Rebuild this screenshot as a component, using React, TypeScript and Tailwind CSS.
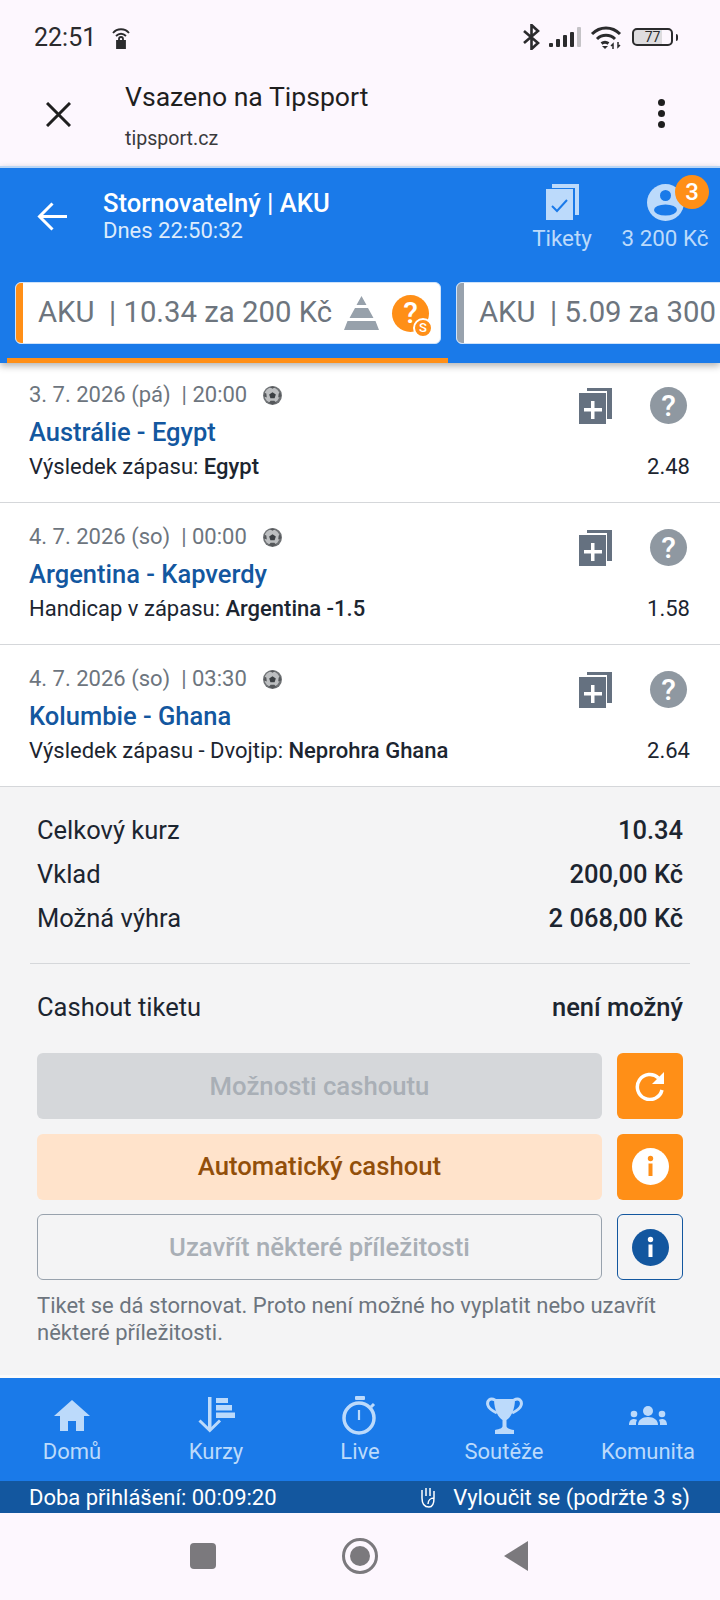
import React from 'react';

const matches = [
  { date: '3. 7. 2026 (pá)', time: '20:00', name: 'Austrálie - Egypt', label: 'Výsledek zápasu: ', pick: 'Egypt', odd: '2.48' },
  { date: '4. 7. 2026 (so)', time: '00:00', name: 'Argentina - Kapverdy', label: 'Handicap v zápasu: ', pick: 'Argentina -1.5', odd: '1.58' },
  { date: '4. 7. 2026 (so)', time: '03:30', name: 'Kolumbie - Ghana', label: 'Výsledek zápasu - Dvojtip: ', pick: 'Neprohra Ghana', odd: '2.64' },
];

const totals = [
  { label: 'Celkový kurz', value: '10.34' },
  { label: 'Vklad', value: '200,00 Kč' },
  { label: 'Možná výhra', value: '2 068,00 Kč' },
];

const Ball = () => (
  <svg width="19" height="19" viewBox="0 0 20 20">
    <circle cx="10" cy="10" r="10" fill="#6f7275" />
    <circle cx="9.500" cy="9.500" r="8" fill="#bdbfc1" />
    <path d="M10 6.500l3.500 2.500-1.300 4H7.800L6.500 9z" fill="#3c4044" />
    <path d="M7 1l3-.5 3 .5-3 2zM1 11l.5-4 2 1 .5 4zM19 11l-.5-4-2 1-.5 4zM6 18l2-2.500h4l2 2.500-4 1.500z" fill="#55585b" />
  </svg>
);

const AddIcon = () => (
  <svg width="33" height="36" viewBox="0 0 33 36">
    <path d="M8 0h25v31h-5V3H8z" fill="#657180" />
    <path d="M0 5h27v31H0z" fill="#657180" />
    <path d="M12 13h3.500v7H23v3.500h-7.500V31H12v-7.500H5V20h7z" fill="#fff" />
  </svg>
);

const Question = ({ color = '#8f98a1' }: { color?: string }) => (
  <div className="flex h-[37px] w-[37px] items-center justify-center rounded-full text-[30px] font-medium leading-none text-white" style={{ background: color }}>
    ?
  </div>
);

const InfoDot = ({ bg, fg }: { bg: string; fg: string }) => (
  <svg width="37" height="37" viewBox="0 0 37 37">
    <circle cx="18.500" cy="18.500" r="18.500" fill={bg} />
    <circle cx="18.500" cy="10.500" r="2.700" fill={fg} />
    <path d="M16.500 15.500h4V28h-4z" fill={fg} />
  </svg>
);

const navItems = [
  {
    label: 'Domů',
    icon: (
      <svg width="36" height="31" viewBox="0 0 36 31" fill="#bcdafb">
        <path d="M18 0l18 16h-6v15h-8V21h-8v10H6V16H0z" />
      </svg>
    ),
  },
  {
    label: 'Kurzy',
    icon: (
      <svg width="37" height="36" viewBox="0 0 37 36" fill="#bcdafb">
        <path d="M10 0h3.500v32H10z" />
        <path d="M1.500 23.500l10.300 10 10.200-10" fill="none" stroke="#bcdafb" strokeWidth="3" />
        <path d="M18 1h12v5H18zM18 8h16v5.500H18zM18 15.500h19V21H18z" />
      </svg>
    ),
  },
  {
    label: 'Live',
    icon: (
      <svg width="36" height="39" viewBox="0 0 36 39" fill="none" stroke="#bcdafb">
        <rect x="13" y="0" width="10" height="4" rx="1" fill="#bcdafb" stroke="none" />
        <circle cx="17" cy="22" r="15" strokeWidth="3.500" />
        <path d="M17 14v10" strokeWidth="2.200" />
        <path d="M29 11l3-3" strokeWidth="3" />
      </svg>
    ),
  },
  {
    label: 'Soutěže',
    icon: (
      <svg width="37" height="37" viewBox="0 0 37 37" fill="#bcdafb">
        <path d="M8 2h21c0 12-5 19-8.500 21v6c0 2 2.500 3 7.500 4v4H9v-4c5-1 7.500-2 7.500-4v-6C13 21 8 14 8 2z" />
        <path d="M9 3C4 0 .8 4 1.800 8c1 4 5 6 9 8M28 3c5-3 8.200 1 7.200 5-1 4-5 6-9 8" fill="none" stroke="#bcdafb" strokeWidth="3" />
      </svg>
    ),
  },
  {
    label: 'Komunita',
    icon: (
      <svg width="38" height="19" viewBox="0 0 38 19" fill="#bcdafb">
        <circle cx="19" cy="5" r="5" />
        <circle cx="5" cy="8" r="3.300" />
        <circle cx="33" cy="8" r="3.300" />
        <path d="M9 19c0-5 4-8 10-8s10 3 10 8z" />
        <path d="M0 19c0-4 2-6 5-6 2 0 3 1 3 1-1 1.500-1 3-1 5zM38 19c0-4-2-6-5-6-2 0-3 1-3 1 1 1.500 1 3 1 5z" />
      </svg>
    ),
  },
];

export default function App() {
  return (
    <div className="flex h-[1600px] w-[720px] flex-col overflow-hidden bg-[#fdf7fe] font-['Roboto',sans-serif] text-[#1c2530]">
      {/* android status bar */}
      <div className="flex h-[74px] shrink-0 items-center justify-between pl-[34px] pr-[42px]">
        <div className="flex items-center gap-[15px]">
          <span className="text-[25px] leading-none text-[#2b2b2d]">22:51</span>
          <svg width="20" height="23" viewBox="0 0 20 23" fill="none" stroke="#2b2b2d" strokeWidth="1.800">
            <path d="M2 7c4-5 12-5 16 0M5 10c3-3 7-3 10 0" />
            <path d="M6 15h8v7H6z" fill="#2b2b2d" />
            <path d="M8 15v-2a2 2 0 014 0v2" />
          </svg>
        </div>
        <div className="flex items-center">
          <svg width="17" height="26" viewBox="0 0 17 26" fill="none" stroke="#2b2b2d" strokeWidth="2.600">
            <path d="M1 7l14 12-6.500 6V1L15 7 1 19" />
          </svg>
          <svg width="32" height="20" viewBox="0 0 32 20" className="ml-[9px]">
            <rect x="0" y="16" width="4" height="4" rx="1" fill="#2b2b2d" />
            <rect x="7" y="12" width="4" height="8" rx="1" fill="#2b2b2d" />
            <rect x="14" y="8" width="4" height="12" rx="1" fill="#2b2b2d" />
            <rect x="21" y="5" width="4" height="15" rx="1" fill="#2b2b2d" />
            <rect x="28" y="0" width="4" height="20" rx="1" fill="#c5c3c7" />
          </svg>
          <svg width="32" height="23" viewBox="0 0 32 23" fill="none" stroke="#2b2b2d" strokeWidth="3" className="ml-[9px]">
            <path d="M2 8c8-8 20-8 28 0M7 13c5-5 13-5 18 0M11.500 17.500c2-1.500 5-1.500 7 0" />
            <path d="M15 23l-3-3h6z" fill="#2b2b2d" stroke="none" />
            <path d="M23 23v-5l-2 2M28 16v5l2-2" strokeWidth="1.500" />
          </svg>
          <div className="ml-[10px] flex items-center">
            <div className="flex h-[18px] w-[41px] items-center justify-center rounded-[5px] border-2 border-[#2b2b2d] bg-[linear-gradient(90deg,#dedcdf_75%,transparent_75%)] text-[14px] leading-none text-[#2b2b2d]">
              77
            </div>
            <div className="ml-[3px] h-[7px] w-[2px] rounded-r bg-[#2b2b2d]" />
          </div>
        </div>
      </div>

      {/* browser toolbar */}
      <div className="flex h-[92px] shrink-0 items-start pl-[46px] pr-[55px]">
        <svg width="25" height="25" viewBox="0 0 25 25" className="mt-[28px]" stroke="#1f1f1f" strokeWidth="3">
          <path d="M1 1l23 23M24 1L1 24" />
        </svg>
        <div className="ml-[54px] flex-1 pt-[1px]">
          <div className="text-[26.600px] leading-[44px] text-[#1f1f1f]">Vsazeno na Tipsport</div>
          <div className="mt-[4px] text-[19.600px] leading-[32px] text-[#3a3a3c]">tipsport.cz</div>
        </div>
        <div className="mt-[25px] flex flex-col gap-[4px]">
          <span className="h-[7px] w-[7px] rounded-full bg-[#1f1f1f]" />
          <span className="h-[7px] w-[7px] rounded-full bg-[#1f1f1f]" />
          <span className="h-[7px] w-[7px] rounded-full bg-[#1f1f1f]" />
        </div>
      </div>

      {/* blue header */}
      <div className="relative z-10 h-[197px] shrink-0 border-t-[2px] border-[#b9d6f6] bg-[#1a7ae9] shadow-[0_3px_7px_rgba(0,0,0,0.3)]">
        <div className="flex h-[114px] items-start pl-[37px] pr-[13px]">
          <svg width="30" height="29" viewBox="0 0 30 29" className="mt-[34px]" fill="none" stroke="#fff" strokeWidth="3">
            <path d="M30 14.500H3M15.500 1.500L2.500 14.500l13 13" />
          </svg>
          <div className="ml-[36px] mt-[20px] flex-1 text-white">
            <div className="text-[25.600px] font-medium leading-[30px]">Stornovatelný | AKU</div>
            <div className="text-[22px] leading-[26px] text-[#dcebfc]">Dnes 22:50:32</div>
          </div>
          <div className="mt-[16px] flex w-[60px] flex-col items-center">
            <svg width="33" height="36" viewBox="0 0 33 36">
              <path d="M6 0h27v31h-4V4H6z" fill="#bcdafb" />
              <path d="M0 5h27v31H0z" fill="#bcdafb" />
              <path d="M6 22l5 5 10-11" fill="none" stroke="#1a7ae9" strokeWidth="2" />
            </svg>
            <span className="mt-[4px] text-[22.400px] leading-[28px] text-[#bcdafb]">Tikety</span>
          </div>
          <div className="relative ml-[31px] mt-[16px] flex w-[84px] flex-col items-center">
            <svg width="37" height="37" viewBox="0 0 37 37">
              <circle cx="18.500" cy="18.500" r="18.500" fill="#bcdafb" />
              <circle cx="18.500" cy="11.500" r="5.500" fill="#1a7ae9" />
              <ellipse cx="18.500" cy="26" rx="11.500" ry="5.500" fill="#1a7ae9" />
            </svg>
            <span className="mt-[3px] whitespace-nowrap text-[22.400px] leading-[28px] text-[#bcdafb]">3 200 Kč</span>
            <span className="absolute left-[52px] top-[-9px] flex h-[34px] w-[34px] items-center justify-center rounded-full bg-[#ff8f17] text-[24px] font-medium text-white">
              3
            </span>
          </div>
        </div>

        <div className="flex gap-[15px] overflow-hidden pl-[15px]">
          <div className="flex h-[62px] w-[426px] shrink-0 items-center overflow-hidden rounded-[6px] border border-[#cfe3fa] bg-white text-[29.300px] text-[#6d757e]">
            <span className="h-full w-[7px] bg-[#ff8f17]" />
            <span className="ml-[15px] whitespace-pre">AKU  | 10.34 za 200 Kč</span>
            <svg width="35" height="34" viewBox="0 0 35 34" className="ml-[12px]">
              <path d="M17.500 0l5 9h-10zM11 12h13l5.500 10H5.500zM3.500 25h28l3.500 9H0z" fill="#97a1ab" />
            </svg>
            <div className="relative ml-[13px]">
              <Question color="#ff8f17" />
              <span className="absolute left-[21px] top-[23px] flex h-[20px] w-[20px] items-center justify-center rounded-full border-2 border-white bg-[#ff8f17] text-[13px] font-medium leading-none text-white">
                S
              </span>
            </div>
          </div>
          <div className="flex h-[62px] w-[300px] shrink-0 items-center overflow-hidden rounded-[6px] border border-[#cfe3fa] bg-white text-[29.300px] text-[#6d757e]">
            <span className="h-full w-[7px] bg-[#98a2ad]" />
            <span className="ml-[15px] whitespace-pre">AKU  | 5.09 za 300</span>
          </div>
        </div>
        <div className="ml-[7px] mt-[14px] h-[5px] w-[441px] bg-[#ff8f17]" />
      </div>

      {/* tips */}
      <div className="shrink-0 bg-white">
        {matches.map(m => (
          <div key={m.name} className="flex h-[142px] border-b border-[#d5d7da] pl-[29px] pr-[30px] pt-[20px] first:h-[140px] first:pt-[18px]">
            <div className="flex-1">
              <div className="flex items-center text-[22px] leading-[28px] text-[#6d757e]">
                <span className="whitespace-pre">{m.date}  | {m.time}</span>
                <span className="ml-[16px]"><Ball /></span>
              </div>
              <div className="mt-[7px] text-[25.500px] font-medium leading-[32px] text-[#13579f]">{m.name}</div>
              <div className="mt-[5px] text-[22px] leading-[28px]">
                {m.label}<span className="font-medium">{m.pick}</span>
              </div>
            </div>
            <div className="flex w-[120px] flex-col items-end">
              <div className="mt-[6px] flex items-center gap-[38px] pr-[3px]">
                <AddIcon />
                <Question />
              </div>
              <div className="mt-[29px] text-[22px] leading-[28px]">{m.odd}</div>
            </div>
          </div>
        ))}
      </div>

      {/* summary */}
      <div className="flex-1 border-b-[3px] border-[#fbfbfb] bg-[#f4f4f5] px-[30px] pt-[25px]">
        <div className="flex flex-col gap-[8px] border-b border-[#d5d7da] px-[7px] pb-[27px]">
          {totals.map(t => (
            <div key={t.label} className="flex h-[36px] items-center justify-between text-[25.500px]">
              <span>{t.label}</span>
              <span className="font-medium">{t.value}</span>
            </div>
          ))}
        </div>
        <div className="flex h-[87px] items-center justify-between px-[7px] text-[25.500px]">
          <span>Cashout tiketu</span>
          <span className="font-medium">není možný</span>
        </div>
        <div className="mt-[2px] flex flex-col gap-[14.500px] pl-[7px] pr-[7px]">
          <div className="flex gap-[15px]">
            <div className="flex h-[66px] flex-1 items-center justify-center rounded-[6px] bg-[#d5d7da] text-[25.700px] font-medium text-[#a9afb6]">Možnosti cashoutu</div>
            <div className="flex h-[66px] w-[66px] items-center justify-center rounded-[6px] bg-[#ff8f17]">
              <svg width="30" height="30" viewBox="0 0 30 30" fill="none" stroke="#fff" strokeWidth="3.500">
                <path d="M27 19a12.500 12.500 0 11-3.500-12" />
                <path d="M29 1v12H17z" fill="#fff" stroke="none" />
              </svg>
            </div>
          </div>
          <div className="flex gap-[15px]">
            <div className="flex h-[66px] flex-1 items-center justify-center rounded-[6px] bg-[#ffe3cb] text-[25.700px] font-medium text-[#924f0a]">Automatický cashout</div>
            <div className="flex h-[66px] w-[66px] items-center justify-center rounded-[6px] bg-[#ff8f17]">
              <InfoDot bg="#fff" fg="#ff8f17" />
            </div>
          </div>
          <div className="flex gap-[15px]">
            <div className="flex h-[66px] flex-1 items-center justify-center rounded-[6px] border border-[#98a2ad] text-[25.700px] font-medium text-[#a9afb6]">Uzavřít některé příležitosti</div>
            <div className="flex h-[66px] w-[66px] items-center justify-center rounded-[6px] border border-[#13579f]">
              <InfoDot bg="#13579f" fg="#fff" />
            </div>
          </div>
        </div>
        <p className="mt-[12px] px-[7px] text-[22px] leading-[27px] text-[#6d757e]">
          Tiket se dá stornovat. Proto není možné ho vyplatit nebo uzavřít některé příležitosti.
        </p>
      </div>

      {/* bottom nav */}
      <div className="h-[135px] shrink-0 bg-[#1a7ae9]">
        <div className="grid h-[103px] grid-cols-5">
          {navItems.map(n => (
            <div key={n.label} className="flex flex-col items-center">
              <div className="flex h-[60px] items-center pt-[14px]">{n.icon}</div>
              <span className="text-[22px] leading-[28px] text-[#bcdafb]">{n.label}</span>
            </div>
          ))}
        </div>
        <div className="flex h-[32px] items-center justify-between bg-[#13579f] pl-[29px] pr-[30px] text-[22px] text-white">
          <span>Doba přihlášení: 00:09:20</span>
          <span className="flex items-center gap-[16px]">
            <svg width="18" height="22" viewBox="0 0 18 22" fill="none" stroke="#fff" strokeWidth="1.500">
              <path d="M3 12V4M7 10V2M11 10V2M15 12V5M3 12c0 7 3 9 7 9 3 0 5-3 5-9M15 12c-3 0-6 2-6 6" />
            </svg>
            Vyloučit se (podržte 3 s)
          </span>
        </div>
      </div>

      {/* android nav bar */}
      <div className="flex h-[87px] shrink-0 items-center justify-center gap-[126px] pb-[2px] pr-[2px]">
        <div className="h-[26px] w-[26px] rounded-[4px] bg-[#7b797d]" />
        <div className="flex h-[36px] w-[36px] items-center justify-center rounded-full border-[3px] border-[#7b797d]">
          <div className="h-[20px] w-[20px] rounded-full bg-[#7b797d]" />
        </div>
        <svg width="24" height="30" viewBox="0 0 24 30">
          <path d="M24 0v30L0 15z" fill="#7b797d" />
        </svg>
      </div>
    </div>
  );
}
